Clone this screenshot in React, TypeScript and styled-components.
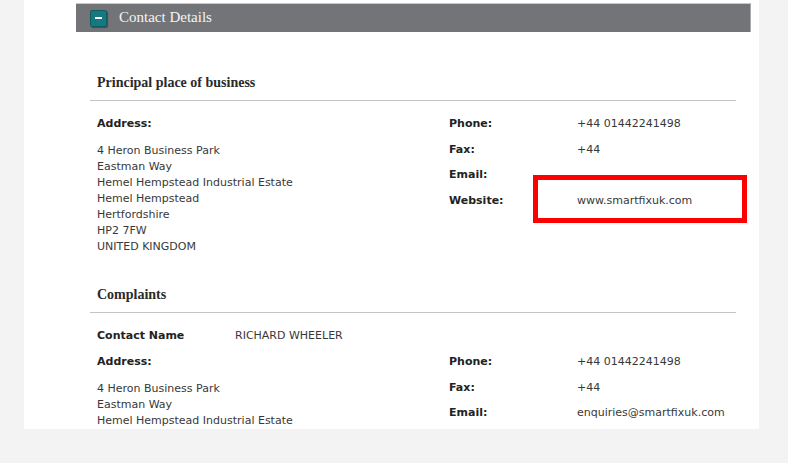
import React from 'react';
import styled, { createGlobalStyle } from 'styled-components';

const GlobalStyle = createGlobalStyle`
  html, body {
    margin: 0;
    padding: 0;
    background: #f3f3f3;
  }
`;

const Panel = styled.div`
  position: relative;
  margin-left: 24px;
  width: 735px;
  height: 429px;
  overflow: hidden;
  background: #ffffff;
  padding-top: 3px;
  box-sizing: border-box;
`;

const HeaderBar = styled.div`
  margin-left: 52px;
  width: 675px;
  height: 29px;
  box-sizing: border-box;
  background: #737478;
  border-top: 1px solid #c9c9cb;
  border-right: 1px solid #a9a9ac;
  display: flex;
  align-items: center;
  padding-left: 14px;
  gap: 12px;
`;

const ToggleIcon = styled.span`
  width: 17px;
  height: 17px;
  box-sizing: border-box;
  border-radius: 2px;
  background: #17797f;
  border: 1px solid #0f5d62;
  box-shadow: 1px 1px 1px rgba(0, 0, 0, 0.35);
  display: flex;
  align-items: center;
  justify-content: center;
  &::after {
    content: '';
    width: 7px;
    height: 2px;
    background: #ffffff;
  }
`;

const HeaderTitle = styled.span`
  font-family: 'Liberation Serif', 'DejaVu Serif', serif;
  font-size: 15px;
  color: #f4f4f4;
  margin-top: -1px;
`;

const Content = styled.div`
  margin-left: 66px;
  width: 646px;
`;

const SectionHeading = styled.div<{ $top: number }>`
  margin-top: ${(p) => p.$top}px;
  padding-left: 7px;
  height: 19px;
  line-height: 19px;
  font-family: 'Liberation Serif', 'DejaVu Serif', serif;
  font-weight: 700;
  font-size: 14px;
  color: #2a2a2a;
  border-bottom: 1px solid #c4c4c4;
  padding-bottom: 8px;
`;

const Body = styled.div`
  padding-top: 15px;
  font-family: 'DejaVu Sans', Verdana, sans-serif;
  font-size: 11px;
  line-height: 16px;
  color: #383838;
`;

const Columns = styled.div`
  display: flex;
`;

const LeftCol = styled.div`
  width: 352px;
  padding-left: 7px;
`;

const RightCol = styled.div`
  display: flex;
  flex-direction: column;
`;

const Label = styled.div`
  font-weight: 700;
  color: #222222;
`;

const AddressLines = styled.div`
  margin-top: 11px;
`;

const Pair = styled.div`
  display: flex;
  height: 16px;
  margin-bottom: 9.5px;
`;

const PairLabel = styled.div<{ $w: number }>`
  width: ${(p) => p.$w}px;
  font-weight: 700;
  color: #222222;
`;

const ContactRow = styled.div`
  display: flex;
  padding-left: 7px;
  margin-bottom: 10px;
`;

const Highlight = styled.div`
  position: absolute;
  left: 509px;
  top: 175px;
  width: 214px;
  height: 48px;
  box-sizing: border-box;
  border: 5px solid #ff0000;
`;

const address = [
  '4 Heron Business Park',
  'Eastman Way',
  'Hemel Hempstead Industrial Estate',
  'Hemel Hempstead',
  'Hertfordshire',
  'HP2 7FW',
  'UNITED KINGDOM',
];

const InfoPairs: React.FC<{ rows: [string, string][] }> = ({ rows }) => (
  <RightCol>
    {rows.map(([k, v]) => (
      <Pair key={k}>
        <PairLabel $w={128}>{k}</PairLabel>
        <div>{v}</div>
      </Pair>
    ))}
  </RightCol>
);

const App: React.FC = () => {
  return (
    <>
      <GlobalStyle />
      <Panel>
        <HeaderBar>
          <ToggleIcon />
          <HeaderTitle>Contact Details</HeaderTitle>
        </HeaderBar>

        <Content>
          <SectionHeading $top={41}>Principal place of business</SectionHeading>
          <Body>
            <Columns>
              <LeftCol>
                <Label>Address:</Label>
                <AddressLines>
                  {address.map((l) => (
                    <div key={l}>{l}</div>
                  ))}
                </AddressLines>
              </LeftCol>
              <InfoPairs
                rows={[
                  ['Phone:', '+44 01442241498'],
                  ['Fax:', '+44'],
                  ['Email:', ''],
                  ['Website:', 'www.smartfixuk.com'],
                ]}
              />
            </Columns>
          </Body>

          <SectionHeading $top={30}>Complaints</SectionHeading>
          <Body>
            <ContactRow>
              <PairLabel $w={138}>Contact Name</PairLabel>
              <div>RICHARD WHEELER</div>
            </ContactRow>
            <Columns>
              <LeftCol>
                <Label>Address:</Label>
                <AddressLines>
                  {address.slice(0, 3).map((l) => (
                    <div key={l}>{l}</div>
                  ))}
                </AddressLines>
              </LeftCol>
              <InfoPairs
                rows={[
                  ['Phone:', '+44 01442241498'],
                  ['Fax:', '+44'],
                  ['Email:', 'enquiries@smartfixuk.com'],
                ]}
              />
            </Columns>
          </Body>
        </Content>

        <Highlight />
      </Panel>
    </>
  );
};

export default App;
